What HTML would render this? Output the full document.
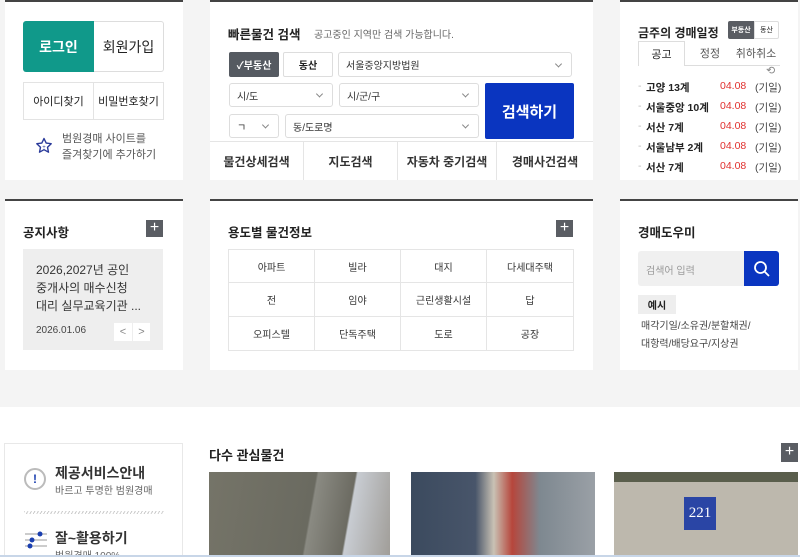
<!DOCTYPE html>
<html><head><meta charset="utf-8"><style>
*{box-sizing:border-box;margin:0;padding:0}
html,body{width:800px;height:557px;overflow:hidden}
body{background:#f4f4f4;font-family:"Liberation Sans","Noto Sans CJK KR",sans-serif;color:#222;position:relative}
.a{position:absolute}
.card{position:absolute;background:#fff;border-top:2px solid #444}
.t{font-size:12.5px;font-weight:bold;color:#222;white-space:nowrap}
.c{display:flex;align-items:center;justify-content:center;white-space:nowrap}
.sel{position:absolute;border:1px solid #ddd;border-radius:3px;background:#fff;font-size:10px;color:#333;padding-left:7px;display:flex;align-items:center}
.sel:after{content:"";position:absolute;right:10px;top:50%;width:4px;height:4px;border-right:1px solid #888;border-bottom:1px solid #888;transform:translateY(-70%) rotate(45deg)}
.plus{position:absolute;width:17px;height:17px;background:#5a5d63;color:#fff;font-size:16px;line-height:16px;text-align:center;font-weight:300}
.row{position:absolute;left:0;width:800px;height:14px;font-size:10.5px;white-space:nowrap}
.row span{position:absolute;top:0}
</style></head><body>
<!-- row1 left -->
<div class="card" style="left:5px;top:0;width:178px;height:180px"></div>
<div class="a c" style="left:23px;top:21px;width:71px;height:51px;background:#10998a;color:#fff;font-size:14px;font-weight:bold;border-radius:3px 0 0 3px">로그인</div>
<div class="a c" style="left:94px;top:21px;width:70px;height:51px;border:1px solid #ddd;border-left:0;font-size:14px;border-radius:0 3px 3px 0">회원가입</div>
<div class="a c" style="left:23px;top:82px;width:71px;height:38px;border:1px solid #e3e3e3;font-size:11px">아이디찾기</div>
<div class="a c" style="left:94px;top:82px;width:70px;height:38px;border:1px solid #e3e3e3;border-left:0;font-size:11px">비밀번호찾기</div>
<svg class="a" style="left:35px;top:137px" width="18" height="18" viewBox="0 0 18 18"><path d="M9 1.5l2.2 4.6 5 .6-3.7 3.5 1 5L9 12.7 4.5 15.2l1-5L1.8 6.7l5-.6z" fill="none" stroke="#2a3a9a" stroke-width="1.4" stroke-linejoin="round"/><text x="9" y="12" font-size="6" text-anchor="middle" fill="#2a3a9a">+</text></svg>
<div class="a" style="left:62px;top:131px;font-size:11px;color:#555;line-height:16px">범원경매 사이트를<br>즐겨찾기에 추가하기</div>
<!-- row1 middle -->
<div class="card" style="left:210px;top:0;width:383px;height:180px"></div>
<div class="a t" style="left:228px;top:24px">빠른물건 검색</div>
<div class="a" style="left:314px;top:26px;font-size:10px;color:#666">공고중인 지역만 검색 가능합니다.</div>
<div class="a c" style="left:229px;top:52px;width:50px;height:25px;background:#555a61;color:#fff;font-size:10px;font-weight:bold;border-radius:2px">✓부동산</div>
<div class="a c" style="left:283px;top:52px;width:50px;height:25px;border:1px solid #ddd;font-size:10px;font-weight:bold;border-radius:2px">동산</div>
<div class="sel" style="left:338px;top:52px;width:234px;height:25px">서울중앙지방법원</div>
<div class="sel" style="left:229px;top:83px;width:104px;height:24px">시/도</div>
<div class="sel" style="left:339px;top:83px;width:140px;height:24px">시/군/구</div>
<div class="sel" style="left:229px;top:114px;width:50px;height:24px">ㄱ</div>
<div class="sel" style="left:285px;top:114px;width:194px;height:24px">동/도로명</div>
<div class="a c" style="left:485px;top:83px;width:89px;height:56px;background:#0a35c0;color:#fff;font-size:15px;font-weight:bold;border-radius:2px">검색하기</div>
<div class="a" style="left:210px;top:141px;width:383px;height:39px;border-top:1px solid #e5e5e5;display:flex;font-size:12px;font-weight:bold;color:#333">
<div class="c" style="width:94px;border-right:1px solid #e5e5e5">물건상세검색</div>
<div class="c" style="width:94px;border-right:1px solid #e5e5e5">지도검색</div>
<div class="c" style="width:99px;border-right:1px solid #e5e5e5">자동차 중기검색</div>
<div class="c" style="flex:1">경매사건검색</div></div>
<!-- row1 right -->
<div class="card" style="left:620px;top:0;width:178px;height:180px"></div>
<div class="a t" style="left:638px;top:24px;font-size:12px">금주의 경매일정</div>
<div class="a c" style="left:728px;top:21px;width:26px;height:18px;background:#5a5d63;color:#fff;font-size:7px;font-weight:bold;border-radius:2px 0 0 2px">부동산</div>
<div class="a c" style="left:754px;top:21px;width:25px;height:18px;border:1px solid #ddd;font-size:7px;border-radius:0 2px 2px 0">동산</div>
<div class="a c" style="left:638px;top:41px;width:47px;height:25px;border:1px solid #ddd;border-bottom:0;font-size:11px;background:#fff">공고</div>
<div class="a" style="left:685px;top:65px;width:95px;border-top:1px solid #ddd"></div>
<div class="a c" style="left:690px;top:42px;width:40px;height:22px;font-size:11px;color:#555">정정</div>
<div class="a c" style="left:734px;top:42px;width:44px;height:22px;font-size:11px;color:#555">취하취소</div>
<div class="a" style="left:766px;top:64px;font-size:11px;color:#888">⟲</div>
<div class="row" style="top:80px"><span style="left:638px;color:#bbb">-</span><span style="left:646px;font-weight:bold">고양 13계</span><span style="left:720px;color:#e0302e">04.08</span><span style="left:755px;color:#444">(기일)</span></div>
<div class="row" style="top:100px"><span style="left:638px;color:#bbb">-</span><span style="left:646px;font-weight:bold">서울중앙 10계</span><span style="left:720px;color:#e0302e">04.08</span><span style="left:755px;color:#444">(기일)</span></div>
<div class="row" style="top:120px"><span style="left:638px;color:#bbb">-</span><span style="left:646px;font-weight:bold">서산 7계</span><span style="left:720px;color:#e0302e">04.08</span><span style="left:755px;color:#444">(기일)</span></div>
<div class="row" style="top:140px"><span style="left:638px;color:#bbb">-</span><span style="left:646px;font-weight:bold">서울남부 2계</span><span style="left:720px;color:#e0302e">04.08</span><span style="left:755px;color:#444">(기일)</span></div>
<div class="row" style="top:160px"><span style="left:638px;color:#bbb">-</span><span style="left:646px;font-weight:bold">서산 7계</span><span style="left:720px;color:#e0302e">04.08</span><span style="left:755px;color:#444">(기일)</span></div>
<!-- row2 left -->
<div class="card" style="left:5px;top:199px;width:178px;height:171px"></div>
<div class="a t" style="left:23px;top:222px">공지사항</div>
<div class="plus" style="left:146px;top:220px">+</div>
<div class="a" style="left:23px;top:249px;width:140px;height:101px;background:#eee"></div>
<div class="a" style="left:36px;top:261px;font-size:12px;line-height:18px;color:#333">2026,2027년 공인<br>중개사의 매수신청<br>대리 실무교육기관 ...</div>
<div class="a" style="left:36px;top:325px;font-size:10px;color:#444">2026.01.06</div>
<div class="a c" style="left:114px;top:323px;width:18px;height:18px;background:#fff;font-size:11px;color:#888">&lt;</div>
<div class="a c" style="left:132px;top:323px;width:18px;height:18px;background:#fff;font-size:11px;color:#888;border-left:1px solid #eee">&gt;</div>
<!-- row2 middle -->
<div class="card" style="left:210px;top:199px;width:383px;height:171px"></div>
<div class="a t" style="left:228px;top:222px">용도별 물건정보</div>
<div class="plus" style="left:556px;top:220px">+</div>
<div class="a" style="left:228px;top:249px;width:346px;height:102px;border:1px solid #e5e5e5;display:grid;grid-template-columns:repeat(4,1fr);grid-template-rows:repeat(3,1fr);font-size:10px;color:#333">
<div class="c" style="border-right:1px solid #e5e5e5;border-bottom:1px solid #e5e5e5">아파트</div><div class="c" style="border-right:1px solid #e5e5e5;border-bottom:1px solid #e5e5e5">빌라</div><div class="c" style="border-right:1px solid #e5e5e5;border-bottom:1px solid #e5e5e5">대지</div><div class="c" style="border-bottom:1px solid #e5e5e5">다세대주택</div>
<div class="c" style="border-right:1px solid #e5e5e5;border-bottom:1px solid #e5e5e5">전</div><div class="c" style="border-right:1px solid #e5e5e5;border-bottom:1px solid #e5e5e5">임야</div><div class="c" style="border-right:1px solid #e5e5e5;border-bottom:1px solid #e5e5e5">근린생활시설</div><div class="c" style="border-bottom:1px solid #e5e5e5">답</div>
<div class="c" style="border-right:1px solid #e5e5e5">오피스텔</div><div class="c" style="border-right:1px solid #e5e5e5">단독주택</div><div class="c" style="border-right:1px solid #e5e5e5">도로</div><div class="c">공장</div></div>
<!-- row2 right -->
<div class="card" style="left:620px;top:199px;width:178px;height:171px"></div>
<div class="a t" style="left:638px;top:222px">경매도우미</div>
<div class="a" style="left:638px;top:251px;width:106px;height:35px;background:#f0f0f0;font-size:10px;color:#999;padding:11px 0 0 8px;border-radius:3px 0 0 3px">검색어 입력</div>
<div class="a c" style="left:744px;top:251px;width:35px;height:35px;background:#0a35c0;border-radius:0 3px 3px 0"><svg width="18" height="18" viewBox="0 0 18 18"><circle cx="7.5" cy="7.5" r="5.5" fill="none" stroke="#fff" stroke-width="1.8"/><path d="M11.5 11.5l4.5 4.5" stroke="#fff" stroke-width="1.8"/></svg></div>
<div class="a c" style="left:638px;top:295px;width:38px;height:19px;background:#eee;font-size:10px;font-weight:bold">예시</div>
<div class="a" style="left:641px;top:318px;font-size:10px;line-height:18px;color:#444">매각기일/소유권/분할채권/<br>대항력/배당요구/지상권</div>
<!-- bottom -->
<div class="a" style="left:0;top:407px;width:800px;height:150px;background:#fff"></div>
<div class="a" style="left:4px;top:443px;width:179px;height:120px;border:1px solid #e8e8e8"></div>
<div class="a c" style="left:24px;top:468px;width:22px;height:22px;border:2px solid #bbb;border-radius:50%;color:#1a3fb0;font-size:12px;font-weight:bold">!</div>
<div class="a" style="left:55px;top:463px;font-size:14px;font-weight:bold;color:#333">제공서비스안내</div>
<div class="a" style="left:55px;top:482px;font-size:10px;color:#666">바르고 투명한 범원경매</div>
<div class="a" style="left:24px;top:511px;width:140px;height:3px;background:repeating-linear-gradient(120deg,#ccc 0 1px,transparent 1px 3px)"></div>
<svg class="a" style="left:24px;top:530px" width="24" height="24"><path d="M1 4h22M1 10h22M1 16h22" stroke="#999"/><circle cx="16" cy="4" r="2.5" fill="#1a3fb0"/><circle cx="8" cy="10" r="2.5" fill="#1a3fb0"/><circle cx="6" cy="16" r="2.5" fill="#1a3fb0"/></svg>
<div class="a" style="left:55px;top:528px;font-size:14px;font-weight:bold;color:#333">잘~활용하기</div>
<div class="a" style="left:55px;top:547px;font-size:10px;color:#666">범원경매 100%</div>
<div class="a t" style="left:209px;top:445px;font-size:13px">다수 관심물건</div>
<div class="plus" style="left:781px;top:443px;width:17px;height:19px;line-height:18px">+</div>
<div class="a" style="left:209px;top:472px;width:181px;height:85px;background:linear-gradient(100deg,#757468 0%,#6a6a60 55%,#8a8a82 56%,#6c6b62 75%,#c8ccd2 76%,#a09d98 100%)"></div>
<div class="a" style="left:411px;top:472px;width:184px;height:85px;background:linear-gradient(90deg,#3b4a5e 0%,#48556a 35%,#c9c2b4 45%,#b6463c 55%,#7e8890 70%,#9aa0a6 100%)"></div>
<div class="a" style="left:614px;top:472px;width:184px;height:85px;background:linear-gradient(180deg,#5a5e4c 0 10px,#bdb8ad 10px)"></div>
<div class="a c" style="left:684px;top:497px;width:32px;height:33px;background:#2a45a5;color:#fff;font-family:'Liberation Serif',serif;font-size:15px">221</div>
<div class="a" style="left:0;top:555px;width:800px;height:2px;background:#c8d6e8"></div>
</body></html>
